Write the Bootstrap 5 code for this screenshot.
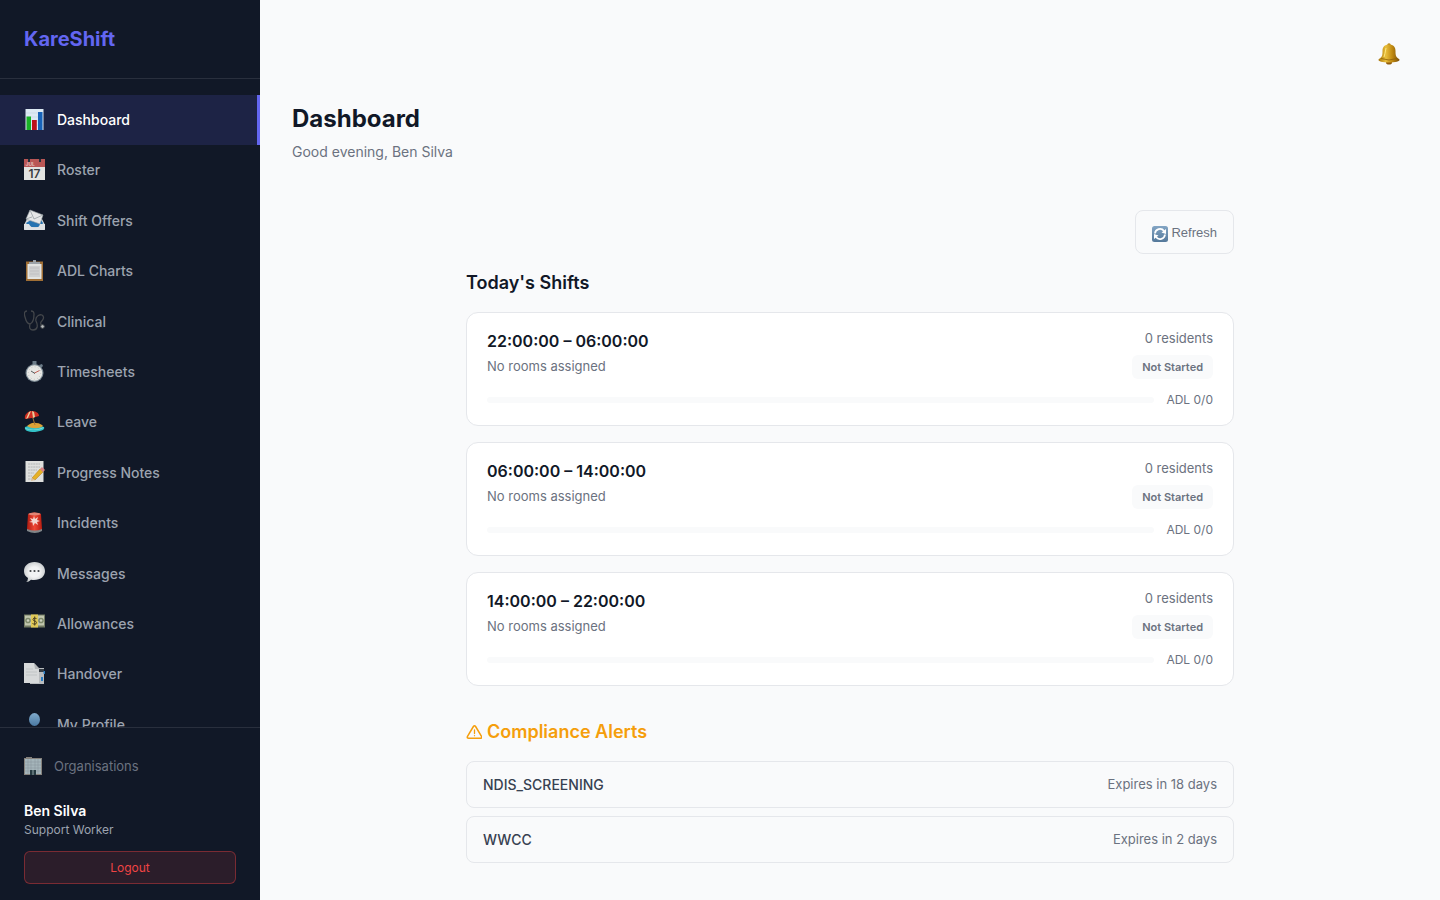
<!DOCTYPE html>
<html lang="en">
<head>
<meta charset="utf-8">
<meta name="viewport" content="width=device-width, initial-scale=1">
<title>KareShift – Dashboard</title>
<link rel="stylesheet" href="https://cdn.jsdelivr.net/npm/bootstrap@5.3.0/dist/css/bootstrap.min.css">
<style>
  :root { --ink:#111827; --muted:#6b7280; --line:#e5e7eb; --page:#f9fafb; --brand:#6366f1; }
  body { font-family: Inter, "Liberation Sans", sans-serif; font-size:14px; line-height:1.6; color:var(--ink); background:var(--page); }
  .sidebar { width:260px; background:var(--ink); }
  .brand-bar { padding:24px; border-bottom:1px solid rgba(255,255,255,.1); }
  .brand-link { font-size:20px; line-height:30px; font-weight:700; color:var(--brand); display:block; }
  .side-nav { min-height:0; overflow-y:auto; scrollbar-width:none; padding-top:16px; }
  .side-nav::-webkit-scrollbar { display:none; }
  .side-link { display:flex; align-items:center; gap:12px; padding:14px 24px; font-weight:500; color:#9ca3af; text-decoration:none; border-right:3px solid transparent; }
  .side-link svg { width:21px; height:21px; flex:none; margin-top:-2px; opacity:.95; }
  .side-link.active { color:#fff; background:rgba(99,102,241,.15); border-right-color:var(--brand); }
  .side-link.active svg { opacity:1; }
  .side-foot { padding:24px 24px 16px; border-top:1px solid rgba(255,255,255,.1); }
  .org-link { font-size:13px; line-height:20px; gap:12px; color:#6b7280; padding:4px 0; margin-bottom:21px; }
  .org-link svg { width:18px; height:18px; }
  .user-name { font-weight:600; line-height:20px; color:#fff; }
  .user-role { font-size:12px; line-height:18px; color:#9ca3af; margin-bottom:12px; }
  .logout-btn { font-family:Inter, sans-serif; font-size:12px; height:33px; line-height:15px; border:1px solid rgba(239,68,68,.4); border-radius:6px; background:rgba(239,68,68,.12); color:#ef4444; }
  .page-main { padding:32px; min-width:0; }
  .bell-btn { border:0; background:none; padding:8px; height:44px; line-height:1; }
  .page-title { font-size:24px; line-height:36px; font-weight:700; margin:25px 0 4px; }
  .page-sub { color:var(--muted); line-height:22px; margin-bottom:47px; }
  .feed { max-width:768px; }
  .refresh-btn { font-family:"Liberation Sans", Arial, sans-serif; font-size:13px; height:44px; padding:3px 16px 0; gap:3px; border:1px solid var(--line); border-radius:8px; background:var(--page); color:var(--muted); }
  .sec-title { font-size:18px; line-height:26px; font-weight:600; margin:0; }
  .shift-card { background:#fff; border:1px solid var(--line); border-radius:12px; padding:15px 20px 16px; }
  .shift-time { font-size:16px; line-height:26px; font-weight:600; margin-bottom:2px; }
  .note-text { font-size:13px; line-height:20px; color:var(--muted); }
  .shift-state { gap:7px; }
  .state-pill { font-size:11px; line-height:16px; font-weight:600; padding:4px 10px; border-radius:6px; background:var(--page); color:var(--muted); }
  .adl-row { gap:12px; margin-top:12px; }
  .adl-track { height:6px; border-radius:3px; background:var(--page); }
  .adl-text { font-size:12px; line-height:18px; color:var(--muted); }
  .warn-title { color:#f59e0b; line-height:27px; gap:5px; }
  .alert-row { border:1px solid var(--line); border-radius:8px; padding:12px 16px; line-height:21px; }
  .alert-name { font-weight:500; color:#374151; }
</style>
</head>
<body>
<svg width="0" height="0" class="position-absolute" aria-hidden="true">
  <defs>
    <linearGradient id="gGold" x1="0" x2="1"><stop offset="0" stop-color="#a87509"/><stop offset=".35" stop-color="#e9bf3c"/><stop offset=".65" stop-color="#c08a12"/><stop offset="1" stop-color="#7c500a"/></linearGradient>
    <linearGradient id="gBlue" x1="0" x2="0" y1="0" y2="1"><stop offset="0" stop-color="#87b3d5"/><stop offset="1" stop-color="#4d7ea9"/></linearGradient>
    <linearGradient id="gRef" x1="0" x2="0" y1="0" y2="1"><stop offset="0" stop-color="#83a5c4"/><stop offset="1" stop-color="#54789a"/></linearGradient>
    <linearGradient id="gRed" x1="0" x2="1"><stop offset="0" stop-color="#b61b10"/><stop offset=".5" stop-color="#fb4b36"/><stop offset="1" stop-color="#c01d10"/></linearGradient>
    <radialGradient id="gWhite"><stop offset=".5" stop-color="#fff"/><stop offset="1" stop-color="#d7dadb"/></radialGradient>
  </defs>
</svg>
<div class="d-flex vh-100">
  <aside class="sidebar d-flex flex-column flex-shrink-0">
    <div class="brand-bar"><a class="brand-link text-decoration-none" href="#">KareShift</a></div>
    <nav class="side-nav flex-grow-1" aria-label="Main">
      <a class="side-link active" href="#" aria-current="page"><svg viewBox="0 0 21 21"><path fill="#dce9f3" d="M1.500 0h18v21h-18z"/><path stroke="#bdcfdd" stroke-width=".5" d="M2 4h17M2 8h17M2 12h17M2 16h17"/><path fill="#18b326" d="M2.500 7.500h4.500V21H2.500z"/><path fill="#bd1118" d="M8 11h4.800v10H8z"/><path fill="#1762b8" d="M14 3h4.500v18H14z"/></svg>Dashboard</a>
      <a class="side-link" href="#"><svg viewBox="0 0 21 21"><path fill="#eeeeec" d="M0 0h21v21H0z"/><path fill="#c25a58" d="M0 0h21v8H0z"/><path fill="#26333d" d="M4 0h2v3H4zM15 0h2v3h-2z"/><text x="1.500" y="7.300" font-size="5" font-weight="700" fill="#efc4c1">JUL</text><text x="10.500" y="19" text-anchor="middle" font-size="12" font-weight="600" fill="#3c3f42">17</text></svg>Roster</a>
      <a class="side-link" href="#"><svg viewBox="0 0 21 21"><path fill="#dfe2e4" d="M3 10h15l3 6v4q0 1-1 1H1q-1 0-1-1v-4z"/><path fill="#2878b9" d="m2 14 5-3h10l2 3-2 4H5z"/><path fill="#f1f2f2" stroke="#9ea6aa" stroke-width=".6" d="M6 1 19 6l-3 9L2 10z"/><path fill="none" stroke="#9ea6aa" stroke-width=".8" d="m6 1 4 9 9-4M2 10l6-2"/><path fill="#ebedef" d="M0 15h5q2 4 6 4t5-4h5v5q0 1-1 1H1q-1 0-1-1z"/></svg>Shift Offers</a>
      <a class="side-link" href="#"><svg viewBox="0 0 21 21"><path fill="#a77336" d="M2 1.500h17V21H2z"/><path fill="#eeeeec" d="M3.500 4h14v15h-14z"/><path fill="#dadada" d="M5 6h11v11H5z"/><path stroke="#bbb" stroke-width=".5" d="M6 8h9M6 11h9M6 14h9"/><path fill="#a4aaae" d="M5 4V2h4V0h3v2h4v2z"/></svg>ADL Charts</a>
      <a class="side-link" href="#"><svg viewBox="0 0 21 21" fill="none"><path stroke="#46494d" stroke-width="1.300" d="M3 1C0 1 0 4 1 7c1 4 3 7 5 7 3-1 4-6 4-10 0-2-1-3-3-3M6 14c-1 4 0 6 3 6 5 0 5-5 3-9-1-4 3-7 6-6 3 2 1 5-1 7-1 2 0 3 1 4"/><circle cx="18.500" cy="16.500" r="1.800" fill="#c4c7c8" stroke="#54585b"/></svg>Clinical</a>
      <a class="side-link" href="#"><svg viewBox="0 0 21 21"><path fill="#71818e" d="M8.500 0h4v4h-4zM15 4l3-1 1 2-2 2z"/><circle cx="10.500" cy="12" r="9" fill="#84929b"/><circle cx="10.500" cy="12" r="7.800" fill="#f3f3ef"/><circle cx="10.500" cy="12" r="6.200" fill="none" stroke="#999" stroke-width=".8" stroke-dasharray=".5 2.700"/><path stroke="#c44034" stroke-width=".8" d="m10.500 12 5-2.500"/><path stroke="#30373b" stroke-width=".8" d="M11 12.500 7 10"/></svg>Timesheets</a>
      <a class="side-link" href="#"><svg viewBox="0 0 21 21"><path fill="#35cbd0" d="M1 16q9-4 19 0c1 2-1 4-9 5-8 0-11-2-10-5z"/><path fill="#9ce8df" d="M1 17q9 4 19-1-2 3-10 3T1 17z"/><path fill="#e8aa37" d="M3 15c3-2 5-4 9-3 4 0 6 2 7 3-4 3-11 3-16 0z"/><path stroke="#ae7b38" d="m8 4 3 10"/><path fill="#db2f21" d="M1 8C0 4 3 1 7 0c5 0 8 2 8 5l-7 2z"/><path fill="#f3d6a2" d="m5 1 2-1-3 7-2 1zM8 0l2 1 1 5-2 1z"/></svg>Leave</a>
      <a class="side-link" href="#"><svg viewBox="0 0 21 21"><path fill="#e9eae7" d="M1.500 0h18v21h-18z"/><path stroke="#b0b4b5" stroke-width=".8" stroke-dasharray="2 .6" d="M4 3h12M4 6h12M4 9h9M4 12h6M4 15h4M4 18h5"/><path fill="#f1ba26" stroke="#ba7c19" stroke-width=".5" d="M8 17 16 8l3 3-8 8z"/><path fill="#e48788" d="m16 8 2-2 3 3-2 2z"/><path fill="#e8c795" d="m8 17 3 2-4 1z"/></svg>Progress Notes</a>
      <a class="side-link" href="#"><svg viewBox="0 0 21 21"><path fill="#878b8e" d="M3 17h15v2q-7 4-15 0z"/><path fill="url(#gRed)" d="M4 2q6-3 13 0l1 15q-7 3-15 0z"/><ellipse cx="10.500" cy="2" rx="6" ry="1.500" fill="#ec8a79"/><path fill="#ffe2da" d="m10 4 1 3 3-2-1 3 3 1-3 1 1 3-3-2-2 3-.5-3.500L5 10l3-1-2-3 3 1z"/></svg>Incidents</a>
      <a class="side-link" href="#"><svg viewBox="0 0 21 21"><path fill="url(#gWhite)" d="M10.500 0C17 0 21 4 21 9s-4 9-11 9c-1 0-2 0-3-.3Q5 20 2 20q2-1 2-4C1 14 0 12 0 9c0-5 4-9 10.500-9z"/><g fill="#454a4c"><circle cx="6.500" cy="9" r="1.100"/><circle cx="10.500" cy="9" r="1.100"/><circle cx="14.500" cy="9" r="1.100"/></g></svg>Messages</a>
      <a class="side-link" href="#"><svg viewBox="0 0 21 21"><path fill="#788067" d="M0 1.500h21v13H0z"/><path fill="#cbd0b6" d="M1 2.500h19v10H1z"/><circle cx="4" cy="7.500" r="2.800" fill="#84906f"/><circle cx="17" cy="7.500" r="2.800" fill="#84906f"/><circle cx="4" cy="7.500" r="1.300" fill="#d7dbc7"/><circle cx="17" cy="7.500" r="1.300" fill="#d7dbc7"/><path fill="#ecd35b" d="M7 1.500h7v13H7z"/><path fill="none" stroke="#514624" d="M12.500 5.500Q9 4 9 6.500c0 2 3.500 1 3.500 3 0 2-2.500 2-4 1M10.700 3.500v9"/></svg>Allowances</a>
      <a class="side-link" href="#"><svg viewBox="0 0 21 21"><path fill="#c2c5c8" d="M6 5h14v16H6z"/><path fill="#3a4147" d="M12 6h8v3h-6z"/><path fill="#2c83cd" d="M19.500 8H21v3h-1.500zM17 14h2v4h-2z"/><path fill="#e2e4e4" d="M0 0h10l5 6v14H0z"/><path fill="#bbbec0" d="m10 0 1 6h5z"/><path stroke="#c3c6c8" stroke-width=".7" d="M2 6h7M2 9h11M2 12h11"/></svg>Handover</a>
      <a class="side-link" href="#"><svg viewBox="0 0 21 21"><ellipse cx="10.500" cy="6.500" rx="5.500" ry="6.500" fill="url(#gBlue)"/><path fill="url(#gBlue)" d="M1 21q0-5 6-6h7q6 1 6 6z"/></svg>My Profile</a>
    </nav>
    <div class="side-foot">
      <a class="org-link d-flex align-items-center text-decoration-none" href="#"><svg viewBox="0 0 18 18"><path fill="#85817c" d="M0 1h2V0h6v1h10v17H0z"/><path fill="#a5b5bb" d="M1 2h16v15H1z"/><path stroke="#84939a" stroke-width=".5" d="M1 5h16M1 8h16M1 11h16M1 14h16M4 2v15M7 2v15M11 2v15M14 2v15"/><path fill="#263a41" d="M6 13h6v5H6z"/><path stroke="#91a4a8" d="M9 13v5"/></svg>Organisations</a>
      <div class="user-name">Ben Silva</div>
      <div class="user-role">Support Worker</div>
      <button type="button" class="logout-btn w-100">Logout</button>
    </div>
  </aside>
  <main class="page-main flex-grow-1 overflow-auto">
    <div class="d-flex justify-content-end">
      <button type="button" class="bell-btn" aria-label="Notifications"><svg width="22" height="22" viewBox="0 0 22 22"><circle cx="11" cy="2" r="1.700" fill="#b78516"/><ellipse cx="11" cy="19.500" rx="3" ry="2" fill="#925c0d"/><path fill="url(#gGold)" d="M11 1.500c4.500 0 6.500 2.500 6.500 6.500 0 5 .5 6 4 8.500.5 2-4 3-10.500 3S0 18.500.5 16.500C4 14 4.500 13 4.500 8c0-4 2-6.500 6.500-6.500z"/><path fill="none" stroke="#8e6009" stroke-width=".8" d="M3 15.500q8 3 16 0"/><path fill="none" stroke="#ffe77e" d="M8 5q-1 6-2 9"/></svg></button>
    </div>
    <h1 class="page-title">Dashboard</h1>
    <p class="page-sub">Good evening, Ben Silva</p>
    <div class="feed mx-auto">
      <div class="d-flex justify-content-end mb-3">
        <button type="button" class="refresh-btn d-flex align-items-center"><svg width="16" height="16" viewBox="0 0 16 16"><rect width="16" height="16" rx="2.500" fill="url(#gRef)"/><g fill="none" stroke="#fff" stroke-width="1.800"><path d="M3 7.500A5 5 0 0 1 12 5M13 8.500A5 5 0 0 1 4 11"/></g><path fill="#fff" d="M14 3v5L9.500 6.500zM2 13V8l4.500 1.500z"/></svg>Refresh</button>
      </div>
      <section>
        <h2 class="sec-title mb-3">Today's Shifts</h2>
        <div class="d-flex flex-column gap-3">
          <article class="shift-card">
            <div class="d-flex justify-content-between">
              <div><div class="shift-time">22:00:00 – 06:00:00</div><div class="note-text">No rooms assigned</div></div>
              <div class="shift-state d-flex flex-column align-items-end"><span class="note-text">0 residents</span><span class="state-pill">Not Started</span></div>
            </div>
            <div class="d-flex align-items-center adl-row"><div class="adl-track flex-grow-1"></div><span class="adl-text">ADL 0/0</span></div>
          </article>
          <article class="shift-card">
            <div class="d-flex justify-content-between">
              <div><div class="shift-time">06:00:00 – 14:00:00</div><div class="note-text">No rooms assigned</div></div>
              <div class="shift-state d-flex flex-column align-items-end"><span class="note-text">0 residents</span><span class="state-pill">Not Started</span></div>
            </div>
            <div class="d-flex align-items-center adl-row"><div class="adl-track flex-grow-1"></div><span class="adl-text">ADL 0/0</span></div>
          </article>
          <article class="shift-card">
            <div class="d-flex justify-content-between">
              <div><div class="shift-time">14:00:00 – 22:00:00</div><div class="note-text">No rooms assigned</div></div>
              <div class="shift-state d-flex flex-column align-items-end"><span class="note-text">0 residents</span><span class="state-pill">Not Started</span></div>
            </div>
            <div class="d-flex align-items-center adl-row"><div class="adl-track flex-grow-1"></div><span class="adl-text">ADL 0/0</span></div>
          </article>
        </div>
      </section>
      <section class="mt-4 pt-2">
        <h2 class="sec-title warn-title mb-3 d-flex align-items-center"><svg width="16" height="16" viewBox="0 0 16 16" fill="none" stroke="#f59e0b" stroke-width="1.500" stroke-linecap="round" stroke-linejoin="round" aria-hidden="true"><path d="M7.400 2.500 1.500 12.300q-.8 1.900 1.200 1.900h11.600q2 0 1.200-1.900L9.600 2.500q-1.100-1.600-2.200 0z"/><path stroke-width="1.300" d="M8.500 6v3.500M8.500 11.600v.1"/></svg>Compliance Alerts</h2>
        <div class="d-flex flex-column gap-2">
          <div class="alert-row d-flex justify-content-between"><span class="alert-name">NDIS_SCREENING</span><span class="note-text">Expires in 18 days</span></div>
          <div class="alert-row d-flex justify-content-between"><span class="alert-name">WWCC</span><span class="note-text">Expires in 2 days</span></div>
        </div>
      </section>
    </div>
  </main>
</div>
<script src="https://cdn.jsdelivr.net/npm/bootstrap@5.3.0/dist/js/bootstrap.bundle.min.js"></script>
</body>
</html>
